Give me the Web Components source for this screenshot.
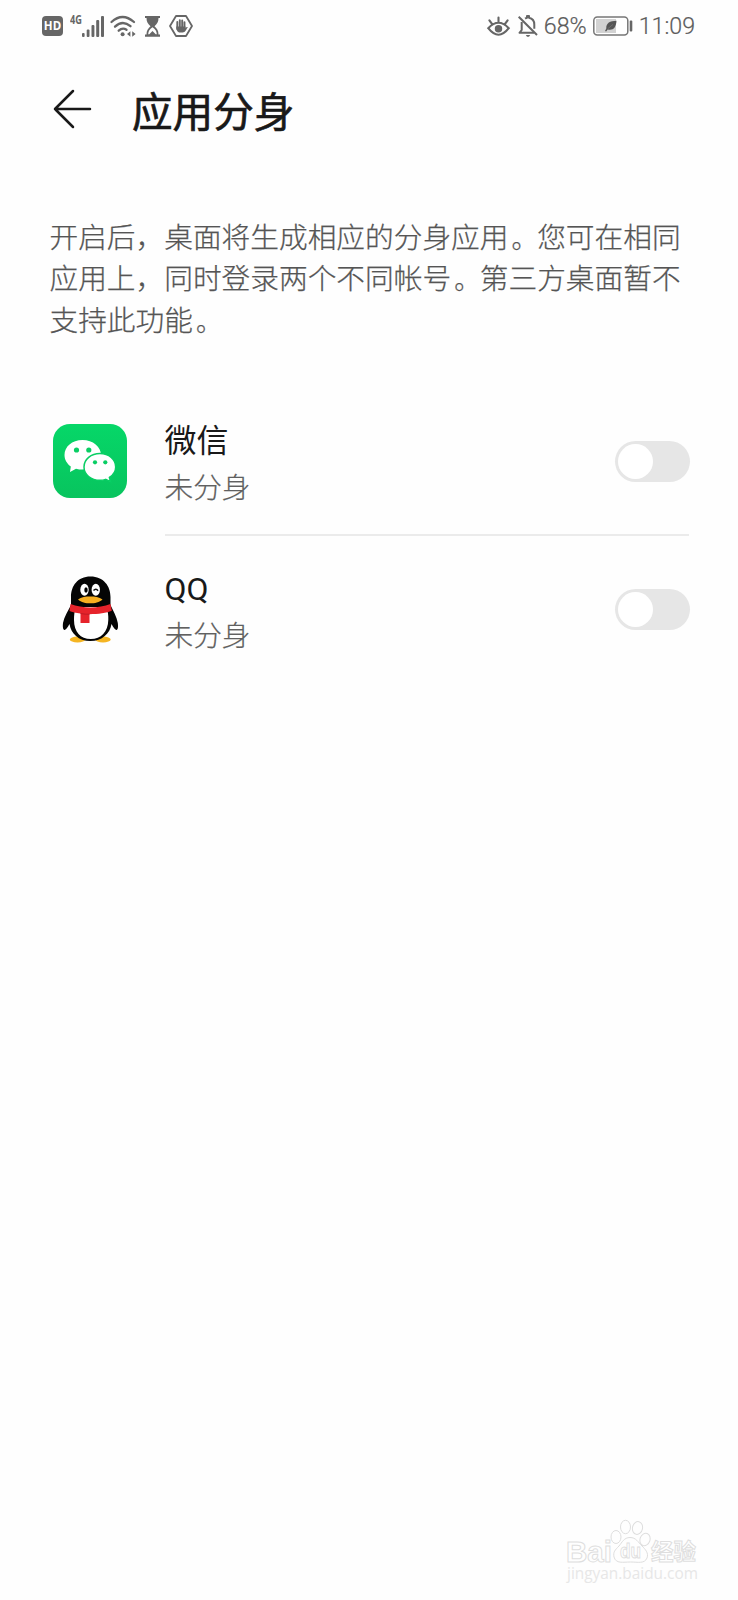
<!DOCTYPE html>
<html lang="zh-CN"><head><meta charset="utf-8"><title>应用分身</title>
<style>html,body{margin:0;background:#fefefe}body{font-family:Roboto,"Noto Sans CJK SC",sans-serif}</style></head>
<body><clone-page></clone-page>
<script>
const define=(name,html)=>customElements.define(name,class extends HTMLElement{
  constructor(){super();this.attachShadow({mode:'open'}).innerHTML=html;}
});
define('status-bar',`<style>
:host{display:flex;height:52px;box-sizing:border-box;padding:0 43px 0 42px;align-items:center;justify-content:space-between;color:#666}
div{display:flex;align-items:center}svg{display:block;overflow:visible}span{font:300 23.2px/28px Roboto,sans-serif;color:#5c5c5c;-webkit-text-stroke:.2px #5c5c5c;white-space:nowrap}
.hd{font:700 11.5px/20px "Open Sans",sans-serif;color:#fff;background:#666;border-radius:4px;width:21px;height:20px;text-align:center;-webkit-text-stroke:0}
.g{font:700 11.5px/12px "Open Sans",sans-serif;display:block;transform:scaleX(.8);transform-origin:0 50%;width:12px;margin:-12px 0 0 7px;-webkit-text-stroke:0;color:#666}
</style>
<div><span class="hd">HD</span><span class="g">4G</span>
<svg width="22" height="22" viewBox="0 0 22 22" fill="#666"><rect x="0" y="18" width="2.6" height="4" rx="1"/><rect x="4.7" y="14.5" width="2.8" height="7.5" rx="1"/><rect x="9.500" y="10" width="2.9" height="12" rx="1"/><rect x="14.200" y="5" width="3" height="17" rx="1"/><rect x="19" y="1" width="3" height="21" rx="1"/></svg>
<svg style="margin-left:6px" width="26" height="22" viewBox="0 0 26 22" fill="none" stroke="#666" stroke-width="2.3" stroke-linecap="round"><path d="M1.500 7Q12.500-3 24 7M5 11.700Q12.600 4.500 20.500 11.200M8.700 15.700Q12.500 12.200 16.500 14.800"/><circle cx="12.600" cy="19.200" r="2" fill="#666" stroke="none"/><path d="m20.400 16.200v5.500l-3.400-2.700zm1.800 0v5.500l3.400-2.700z" fill="#666" stroke="none"/></svg>
<svg style="margin-left:8px" width="17" height="21" viewBox="0 0 17 21" fill="#666"><path d="M1 0h15v2h-1.500c0 4-1.500 6-4 8.300 2.500 2.200 4 4.200 4 8.200H16v2.200H1v-2.200h1.500c0-4 1.500-6 4-8.200C4 8 2.500 6 2.500 2H1z"/><path fill="#fff" d="M4.200 18.300c.2-3.400 1.400-5.100 4.300-7 2.900 1.900 4.100 3.600 4.300 7h-1.100L8.500 15l-3.200 3.300z"/></svg>
<svg style="margin-left:8px" width="24" height="22" viewBox="0 0 24 22"><path d="M7 1h10l6 10-6 10H7L1 11z" fill="#fff" stroke="#666" stroke-width="1.800" stroke-linejoin="round"/><path d="M8.300 7v7M10.800 5.200v8M13.200 5.400v8M15.500 7.300v7" stroke="#666" stroke-width="1.900" stroke-linecap="round"/><path d="M7.300 11.500h9.200V13l1.300-1c1-.3 1 .5.500 1-1 1.500-2 4.500-4.600 4.500h-2.600C8.300 17.500 7.300 15 7.300 11.500z" fill="#666"/></svg></div>
<div><svg width="23" height="21" viewBox="0 0 24 21" fill="none" stroke="#666" stroke-width="2.200" stroke-linecap="round"><path d="M1.300 12.300Q12 1 22.700 12.300 12 26 1.300 12.300zM12 5.500V1.200M5 7.500 2.500 4M19 7.500 21.500 4"/><circle cx="12" cy="12.800" r="3.900" fill="#666" stroke="none"/></svg>
<svg style="margin-left:8px" width="20" height="22" viewBox="0 0 20 22" fill="none" stroke="#666" stroke-width="2" stroke-linejoin="round"><path d="M7.100 3.600Q8 2.900 9 2.700V1h2v1.700c3.700.7 5.300 3.500 5.300 6.800v4.300M3.700 7v8L1.500 17.800h14.500"/><path d="M.7 1.800 19 20"/><path d="M7.800 20h4.400l-1.200 1.700H9z" fill="#666" stroke="none"/></svg>
<span style="margin-left:6px">68%</span>
<svg style="margin-left:6px" width="40" height="20" viewBox="0 0 40 20"><rect x=".8" y="1" width="34" height="18" rx="3.500" fill="#fff" stroke="#777" stroke-width="1.500"/><path d="M3 3h20v14H3z" fill="#d2d2d2"/><path d="M23.500 4.800c-6.500.2-10.500 2.200-10.200 7.600l-1.300 2.600 1.100.5 1.600-2c5.600 1.300 8.400-2 8.800-8.700z" fill="#555"/><path d="m14.800 12.700 5.200-4.300" stroke="#888" stroke-width=".5"/><rect x="36.700" y="4.500" width="2.600" height="11" rx="1" fill="#666"/></svg>
<span style="margin-left:6px">11:09</span></div>`);
define('page-header',`<style>:host{display:flex;align-items:center;height:114px;padding-left:53px;color:#191919}svg{display:block}h1{margin:0 0 0 40px;padding-top:1px;font:400 40.6px/60px "Noto Sans CJK SC",sans-serif;-webkit-text-stroke:.7px #191919;white-space:nowrap}</style>
<svg width="39" height="40" viewBox="0 0 39 40" fill="none" stroke="#191919" stroke-width="2.500" stroke-linecap="round" stroke-linejoin="round"><path d="M20 2 2 20l18 18M2 20h35"/></svg><h1><slot></slot></h1>`);
define('page-note',`<style>:host{display:block;margin:48.500px 40px 0 49.500px;height:125px;font:300 28.700px/41.700px "Noto Sans CJK SC",sans-serif;color:#555;-webkit-text-stroke:.25px #555;white-space:nowrap}::slotted(i){font-style:normal;font-size:25.700px;line-height:1;margin-left:3px}</style><slot></slot>`);
define('toggle-switch',`<style>:host{display:block;width:75px;height:41px;box-sizing:border-box;border-radius:20.500px;background:#e6e6e6;padding:3px;margin:0 -1px 0 0}i{display:block;width:35px;height:35px;border-radius:50%;background:#fff}</style><i></i>`);
define('app-row',`<style>:host{display:flex;height:148px;padding:0 49px 0 53px;align-items:center}
::slotted(svg){display:block;width:74px;height:74px;flex:none;margin-bottom:2px}
section{flex:1;margin-left:37.500px;height:148px;box-sizing:border-box;display:flex;align-items:center;justify-content:space-between;border-bottom:2px solid var(--line,#ebebeb)}
div{padding-top:3px}
b{display:block;font:400 32px/46px Roboto,"Noto Sans CJK SC",sans-serif;color:#191919}
small{display:block;font:300 28.700px/43px "Noto Sans CJK SC",sans-serif;color:#606060;-webkit-text-stroke:.2px #606060}
</style><slot name="icon"></slot><section><div><b><slot></slot></b><small><slot name="state"></slot></small></div><toggle-switch></toggle-switch></section>`);
define('site-watermark',`<style>:host{position:absolute;left:560px;top:1512px;width:150px;height:76px}svg{display:block;overflow:visible}text{font-family:"Liberation Sans","Noto Sans CJK SC",sans-serif}</style>
<svg width="150" height="76" fill="#fefefe" stroke="#dedede" stroke-width="1"><g><text x="6" y="49.500" font-size="29" font-weight="700" textLength="46" lengthAdjust="spacingAndGlyphs">Bai</text>
<ellipse cx="56" cy="25" rx="5" ry="6.500"/><ellipse cx="65.500" cy="15" rx="5" ry="6.700"/><ellipse cx="77.500" cy="16" rx="5" ry="6.500" transform="rotate(12 77.500 16)"/><ellipse cx="85" cy="27.500" rx="5" ry="6.300" transform="rotate(20 85 27.500)"/><path d="M70 25.500c-6 0-8 5-11 8.500-4 4-6 6-5 11 2 7 9 5 16.500 5s14 2 16.500-4c2-5-2-9-5-12-4-4-6-8.500-12-8.500z"/></g>
<text x="60" y="46" font-size="21" font-weight="700" textLength="21" lengthAdjust="spacingAndGlyphs">du</text>
<text x="91" y="48" font-size="22.500" font-weight="700" style="font-family:'Noto Sans CJK SC',sans-serif">经验</text>
<text x="7" y="67" font-size="17" fill="#e7e7e7" stroke="none" textLength="131" lengthAdjust="spacingAndGlyphs" style="font-family:'Open Sans',sans-serif">jingyan.baidu.com</text></svg>`);
define('clone-page',`<style>:host{display:block;position:relative;width:738px;height:1600px;background:#fefefe;overflow:hidden}main{margin-top:48.500px}.last{--line:transparent}</style>
<status-bar></status-bar><page-header>应用分身</page-header>
<page-note>开启后，桌面将生成相应的分身应用<i>。</i>您可在相同<br>应用上，同时登录两个不同帐号<i>。</i>第三方桌面暂不<br>支持此功能<i>。</i></page-note>
<main><app-row><svg slot="icon" viewBox="0 0 74 74"><defs><linearGradient id="g" x2="0" y2="1"><stop stop-color="#06d768"/><stop offset="1" stop-color="#08c45e"/></linearGradient></defs><rect width="74" height="74" rx="17" fill="url(#g)"/><path d="M29.500 16C19 16 11.500 22.700 11.500 31c0 4.700 2.500 8.700 6.300 11.500L17 48l6-3.300c2 .6 4.200.9 6.500.9C40 45.600 48 39.200 48 31S40 16 29.500 16z" fill="#fff"/><path d="M47 29.500c-9 0-16 6-16 13.500S38 56.300 47 56.300c2 0 3.900-.3 5.600-.9l5 2.300-1.200-4.200C60.300 51 62.700 47.300 62.700 43c0-7.500-6.700-13.500-15.700-13.500z" fill="#fff" stroke="#09ce64" stroke-width="1.500"/><g fill="#09ce64"><circle cx="23.500" cy="26" r="2.600"/><circle cx="35.800" cy="26" r="2.600"/><circle cx="42" cy="38.300" r="2.100"/><circle cx="52.300" cy="38.300" r="2.100"/></g></svg>微信<span slot="state">未分身</span></app-row>
<app-row class="last"><svg slot="icon" viewBox="0 0 74 74"><g fill="#f5b522"><ellipse cx="24.500" cy="67.500" rx="7.700" ry="3"/><ellipse cx="50" cy="67.500" rx="7.700" ry="3"/></g><path fill="#050505" d="M37.500 4.500C24.500 4.500 18 14 18 25v8c-3 6-7 12-8 18-.6 5 .5 7 1.500 7s3.500-3 5-6c1.500 9.500 9 17 20.800 17S57 61.500 58.500 52c1.500 3 4 6 5 6s2-2 1.300-7c-1-6-4.500-12-7.300-18v-8c0-11-7-20.500-20-20.500z"/><path fill="#fff" d="M23 35h30c2 4 2.500 8 2.300 13C55 60 48 67 37.800 67 27.500 67 21 60 21 48c0-5 .4-9 2-13z"/><ellipse cx="31.500" cy="17.800" rx="4.200" ry="6" fill="#fff"/><ellipse cx="42.800" cy="17.800" rx="4.200" ry="6" fill="#fff"/><ellipse cx="33" cy="18" rx="1.700" ry="2.700"/><path d="M40.500 18.500q2.500-2.700 4.500.2" fill="none" stroke="#111" stroke-width="1.500"/><path d="M25 27.500c3-2.500 8-3 12.200-3s9.300.5 12.300 3c-3 3-8 3.800-12.300 3.800S28 30.500 25 27.500z" fill="#f6ae20"/><path fill="#e6232b" d="M17.500 32c12 4.500 28 4.500 40 0l1.300 6.800c-5.200 2.200-13.500 3.400-22.300 3.400V51h-9V41.500c-4.500-.5-8.500-1.500-11-2.500z"/><path d="M27.500 41.500q5 1 9 .7" fill="none" stroke="#b61822" stroke-width=".8"/></svg>QQ<span slot="state">未分身</span></app-row></main><site-watermark></site-watermark>`);
</script></body></html>
